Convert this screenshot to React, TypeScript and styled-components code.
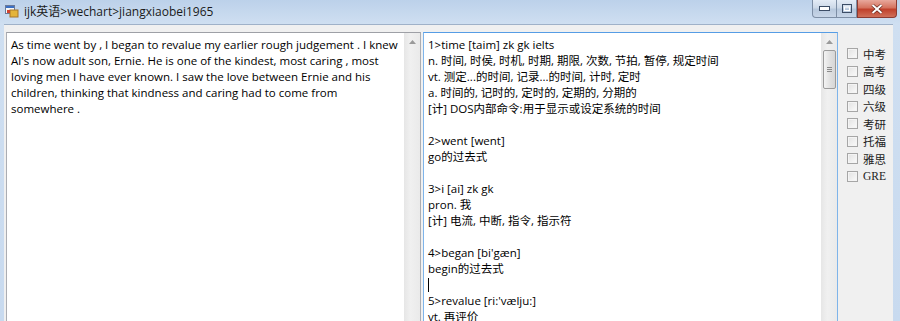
import React from "react";
import styled, { createGlobalStyle } from "styled-components";

const GlobalStyle = createGlobalStyle`
  html, body {
    margin: 0;
    padding: 0;
    overflow: hidden;
    background: #c4d7ed;
  }
`;

//窗口
const Window = styled.div`
  width: 900px;
  height: 321px;
  display: flex;
  flex-direction: column;
  background: linear-gradient(to bottom, #bcd1ea 0px, #cfdff1 24px, #c8daef 100%);
  font-family: "Open Sans", "Noto Sans CJK SC", sans-serif;
  overflow: hidden;
`;

const TitleBar = styled.div`
  height: 24px;
  flex: none;
  display: flex;
  align-items: flex-start;
`;

const AppIcon = styled.svg`
  margin: 5px 0 0 5px;
  flex: none;
`;

const Title = styled.div`
  margin: 4px 0 0 5px;
  font-size: 12px;
  line-height: 16px;
  color: #1a1a1a;
  white-space: nowrap;
`;

const Controls = styled.div`
  margin-left: auto;
  margin-right: 3px;
  display: flex;
  height: 18px;
`;

const CtrlButton = styled.div<{ $close?: boolean; $first?: boolean }>`
  width: ${(p) => (p.$close ? "40px" : p.$first ? "25px" : "20px")};
  height: 18px;
  box-sizing: border-box;
  display: flex;
  align-items: center;
  justify-content: center;
  border: 1px solid ${(p) => (p.$close ? "#8c3b32" : "#7d8ea5")};
  border-top: none;
  border-left: ${(p) => (p.$first || p.$close ? "1px solid" : "none")};
  border-left-color: ${(p) => (p.$close ? "#8c3b32" : "#7d8ea5")};
  border-radius: ${(p) => (p.$close ? "0 0 4px 0" : p.$first ? "0 0 0 4px" : "0")};
  background: ${(p) =>
    p.$close
      ? "linear-gradient(to bottom, #e8a89c 0%, #d5735f 45%, #c0412c 55%, #d0705a 100%)"
      : "linear-gradient(to bottom, #e4ecf6 0%, #cdd9e8 45%, #b7c8dd 55%, #c8d6e8 100%)"};
`;

//客户区
const Client = styled.div`
  flex: 1;
  margin: 0 7px 0 4px;
  background: #f0f0f0;
  border-top: 1px solid #9fb1c8;
  display: flex;
  align-items: flex-start;
  padding: 7px 0 0 2px;
  gap: 2px;
`;

const TextBox = styled.div<{ $focused?: boolean }>`
  width: 415px;
  height: 320px;
  flex: none;
  box-sizing: border-box;
  background: #fff;
  border: 1px solid ${(p) => (p.$focused ? "#7eb4ea" : "#abadb3")};
  border-top-color: ${(p) => (p.$focused ? "#569de5" : "#9ea0a6")};
  display: flex;
`;

const Content = styled.div`
  flex: 1;
  padding: 4px 0 0 4px;
  font-size: 11.5px;
  line-height: 16px;
  color: #000;
`;

const Line = styled.div`
  height: 16px;
  white-space: nowrap;
`;

const Caret = styled.span`
  display: inline-block;
  width: 1px;
  height: 14px;
  margin-top: 1px;
  background: #000;
`;

const ScrollBar = styled.div`
  width: 16px;
  flex: none;
  background: linear-gradient(to right, #e6e6e6, #f0f0f0 40%, #eaeaea);
  display: flex;
  flex-direction: column;
  align-items: center;
`;

const ArrowBtn = styled.div`
  height: 17px;
  width: 16px;
  display: flex;
  align-items: center;
  justify-content: center;
`;

const Thumb = styled.div`
  width: 13px;
  height: 39px;
  box-sizing: border-box;
  border: 1px solid #9b9b9b;
  border-radius: 2px;
  background: linear-gradient(to right, #f3f3f3, #e2e2e2 50%, #d6d6d6);
  display: flex;
  flex-direction: column;
  align-items: center;
  justify-content: center;
  gap: 1px;
`;

const Grip = styled.div`
  width: 5px;
  height: 1px;
  background: #8a8a8a;
`;

//考试等级选项
const CheckList = styled.div`
  margin: 13px 0 0 7px;
  display: flex;
  flex-direction: column;
`;

const CheckRow = styled.label`
  height: 17.5px;
  display: flex;
  align-items: center;
  gap: 5px;
  font-family: "Liberation Serif", "Noto Sans CJK SC", serif;
  font-size: 11.5px;
  color: #222;
`;

const Box = styled.span`
  width: 11px;
  height: 11px;
  box-sizing: border-box;
  border: 1px solid #a6a6a6;
  background: linear-gradient(135deg, #e2e2e2, #fbfbfb);
  box-shadow: inset 0 0 0 1px #f4f4f4;
`;

const sourceLines = [
  "As time went by , I began to revalue my earlier rough judgement . I knew",
  "Al's now adult son, Ernie. He is one of the kindest, most caring , most",
  "loving men I have ever known. I saw the love between Ernie and his",
  "children, thinking that kindness and caring had to come from",
  "somewhere .",
];

const dictLines = [
  "1>time [taim] zk gk ielts",
  "n. 时间, 时侯, 时机, 时期, 期限, 次数, 节拍, 暂停, 规定时间",
  "vt. 测定...的时间, 记录...的时间, 计时, 定时",
  "a. 时间的, 记时的, 定时的, 定期的, 分期的",
  "[计] DOS内部命令:用于显示或设定系统的时间",
  "",
  "2>went [went]",
  "go的过去式",
  "",
  "3>i [ai] zk gk",
  "pron. 我",
  "[计] 电流, 中断, 指令, 指示符",
  "",
  "4>began [bi'gæn]",
  "begin的过去式",
  "|caret",
  "5>revalue [ri:'vælju:]",
  "vt. 再评价",
];

const levels = ["中考", "高考", "四级", "六级", "考研", "托福", "雅思", "GRE"];

const UpArrow = () => (
  <svg width="7" height="4" viewBox="0 0 7 4">
    <path d="M0 4 L3.5 0 L7 4 Z" fill="#9a9a9a" />
  </svg>
);

function App() {
  return (
    <>
      <GlobalStyle />
      <Window>
        <TitleBar>
          <AppIcon width="14" height="13" viewBox="0 0 14 13">
            <rect x="0.5" y="0.5" width="9" height="8" fill="#f7f7f7" stroke="#6b7a99" />
            <rect x="1" y="1" width="8" height="2" fill="#3a6fc4" />
            <rect x="5" y="5" width="8" height="7" fill="#e4b43a" stroke="#a8772a" />
            <rect x="2" y="5" width="3" height="3" fill="#d2432f" />
          </AppIcon>
          <Title>ijk英语&gt;wechart&gt;jiangxiaobei1965</Title>
          <Controls>
            <CtrlButton $first>
              <svg width="11" height="5" viewBox="0 0 11 5">
                <rect x="0.5" y="0.5" width="10" height="4" fill="#fff" stroke="#3c4d66" />
              </svg>
            </CtrlButton>
            <CtrlButton>
              <svg width="10" height="9" viewBox="0 0 10 9">
                <rect x="0.5" y="0.5" width="9" height="8" fill="none" stroke="#3c4d66" />
                <rect x="2.5" y="3" width="5" height="3.5" fill="none" stroke="#fff" />
              </svg>
            </CtrlButton>
            <CtrlButton $close>
              <svg width="12" height="10" viewBox="0 0 12 10">
                <path d="M1.5 1 L10.5 9 M10.5 1 L1.5 9" stroke="#5a1d14" strokeWidth="3.2" />
                <path d="M1.5 1 L10.5 9 M10.5 1 L1.5 9" stroke="#fff" strokeWidth="2" />
              </svg>
            </CtrlButton>
          </Controls>
        </TitleBar>
        <Client>
          <TextBox>
            <Content>
              {sourceLines.map((l, i) => (
                <Line key={i}>{l}</Line>
              ))}
            </Content>
            <ScrollBar>
              <ArrowBtn>
                <UpArrow />
              </ArrowBtn>
            </ScrollBar>
          </TextBox>
          <TextBox $focused>
            <Content>
              {dictLines.map((l, i) => (
                <Line key={i}>{l === "|caret" ? <Caret /> : l}</Line>
              ))}
            </Content>
            <ScrollBar>
              <ArrowBtn>
                <UpArrow />
              </ArrowBtn>
              <Thumb>
                <Grip />
                <Grip />
                <Grip />
              </Thumb>
            </ScrollBar>
          </TextBox>
          <CheckList>
            {levels.map((lv) => (
              <CheckRow key={lv}>
                <Box />
                {lv}
              </CheckRow>
            ))}
          </CheckList>
        </Client>
      </Window>
    </>
  );
}

export default App;
